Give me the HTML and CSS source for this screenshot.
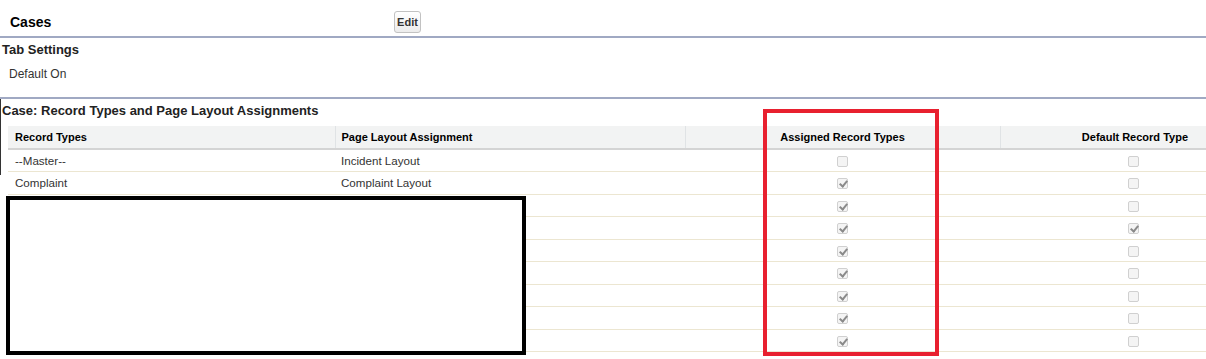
FILE: index.html
```html
<!DOCTYPE html>
<html lang="en">
<head>
  <meta charset="UTF-8">
  <title>Cases</title>
  <link rel="stylesheet" href="styles.css">
</head>
<body>
  <div class="page-head">
    <h2 class="page-title">Cases</h2>
    <button class="btn">Edit</button>
  </div>

  <div class="section">
    <h3 class="section-title">Tab Settings</h3>
    <div class="section-text">Default On</div>
  </div>

  <div class="section section-records">
    <h3 class="section-title">Case: Record Types and Page Layout Assignments</h3>
    <table class="list">
      <thead>
        <tr>
          <th class="col-type">Record Types</th>
          <th class="col-layout">Page Layout Assignment</th>
          <th class="col-assigned">Assigned Record Types</th>
          <th class="col-default">Default Record Type</th>
        </tr>
      </thead>
      <tbody>
        <tr><td>--Master--</td><td>Incident Layout</td><td class="cb-cell"><span class="cb"></span></td><td class="cb-cell last"><span class="cb"></span></td></tr>
        <tr><td>Complaint</td><td>Complaint Layout</td><td class="cb-cell"><span class="cb checked"></span></td><td class="cb-cell last"><span class="cb"></span></td></tr>
        <tr><td></td><td></td><td class="cb-cell"><span class="cb checked"></span></td><td class="cb-cell last"><span class="cb"></span></td></tr>
        <tr><td></td><td></td><td class="cb-cell"><span class="cb checked"></span></td><td class="cb-cell last"><span class="cb checked"></span></td></tr>
        <tr><td></td><td></td><td class="cb-cell"><span class="cb checked"></span></td><td class="cb-cell last"><span class="cb"></span></td></tr>
        <tr><td></td><td></td><td class="cb-cell"><span class="cb checked"></span></td><td class="cb-cell last"><span class="cb"></span></td></tr>
        <tr><td></td><td></td><td class="cb-cell"><span class="cb checked"></span></td><td class="cb-cell last"><span class="cb"></span></td></tr>
        <tr><td></td><td></td><td class="cb-cell"><span class="cb checked"></span></td><td class="cb-cell last"><span class="cb"></span></td></tr>
        <tr><td></td><td></td><td class="cb-cell"><span class="cb checked"></span></td><td class="cb-cell last"><span class="cb"></span></td></tr>
      </tbody>
    </table>
  </div>

  <div class="mark mark-red"></div>
  <div class="mark mark-black"></div>
</body>
</html>
```

FILE: styles.css
```css
* {
  margin: 0;
  padding: 0;
  box-sizing: border-box;
}
body {
  position: relative;
  width: 1206px;
  height: 359px;
  overflow: hidden;
  background: #fff;
  color: #333;
  font-family: "Liberation Sans", Arial, sans-serif;
  font-size: 12px;
}
.page-head {
  display: flex;
  align-items: center;
  height: 38px;
  padding: 8px 0 0 10px;
  border-bottom: 2px solid #a0a9c3;
}
.page-title {
  width: 384px;
  font-size: 14px;
  font-weight: bold;
  color: #000;
  line-height: 18px;
}
.btn {
  width: 27px;
  height: 22px;
  border: 1px solid #c2c2c2;
  border-radius: 3px;
  background: linear-gradient(#fff, #ececec);
  color: #333;
  font-family: "Liberation Sans", Arial, sans-serif;
  font-size: 11px;
  font-weight: bold;
  text-align: center;
}
.section {
  padding-left: 2px;
}
.section-title {
  margin-top: 4px;
  font-size: 13px;
  font-weight: bold;
  line-height: 16px;
  color: #222;
}
.section-text {
  margin-top: 8px;
  padding-left: 7px;
  line-height: 16px;
  margin-bottom: 15px;
}
.section-records {
  position: relative;
  padding-left: 0;
  border-top: 2px solid #a0a9c3;
}
.section-records .section-title {
  padding-left: 2px;
}
.section-records::before {
  content: "";
  position: absolute;
  left: 0;
  top: 0;
  width: 1px;
  height: 76px;
  background: #333;
}
.list {
  margin: 7px 0 0 8px;
  width: 1198px;
  border-collapse: collapse;
  table-layout: fixed;
}
.list th {
  height: 23px;
  background: #f2f3f3;
  border-bottom: 2px solid #d4d4d4;
  border-left: 1px solid #e0e3e5;
  font-size: 11px;
  font-weight: bold;
  color: #000;
  text-align: left;
  padding: 0 6px;
}
.list th:first-child {
  border-left: none;
  padding-left: 7px;
}
.col-type { width: 327px; }
.col-layout { width: 350px; }
.list th.col-assigned {
  width: 315px;
  text-align: center;
}
.list th.col-default {
  width: 206px;
  text-align: right;
  padding-right: 18px;
}
.list td {
  height: 22.5px;
  border-bottom: 1px solid #ece6d1;
  font-size: 11.6px;
  color: #333;
  padding: 0 6px;
  white-space: nowrap;
}
.list td:first-child {
  padding-left: 7px;
}
.list td.cb-cell {
  text-align: center;
}
.list td.last {
  padding-left: 66px;
}
.cb {
  display: inline-block;
  width: 11px;
  height: 11px;
  border: 1px solid #d0d0d0;
  border-radius: 2px;
  background: #f4f4f4;
  vertical-align: middle;
  position: relative;
}
.cb.checked::after {
  content: "";
  position: absolute;
  left: 3px;
  top: 0px;
  width: 3px;
  height: 6px;
  border-right: 2px solid #8a8a8a;
  border-bottom: 2px solid #8a8a8a;
  transform: rotate(40deg);
}
.mark {
  position: absolute;
}
.mark-red {
  left: 763px;
  top: 109px;
  width: 176px;
  height: 247px;
  border: 4px solid #e8202f;
}
.mark-black {
  left: 6px;
  top: 196px;
  width: 520px;
  height: 159px;
  border: 4px solid #000;
  background: #fff;
}
```
